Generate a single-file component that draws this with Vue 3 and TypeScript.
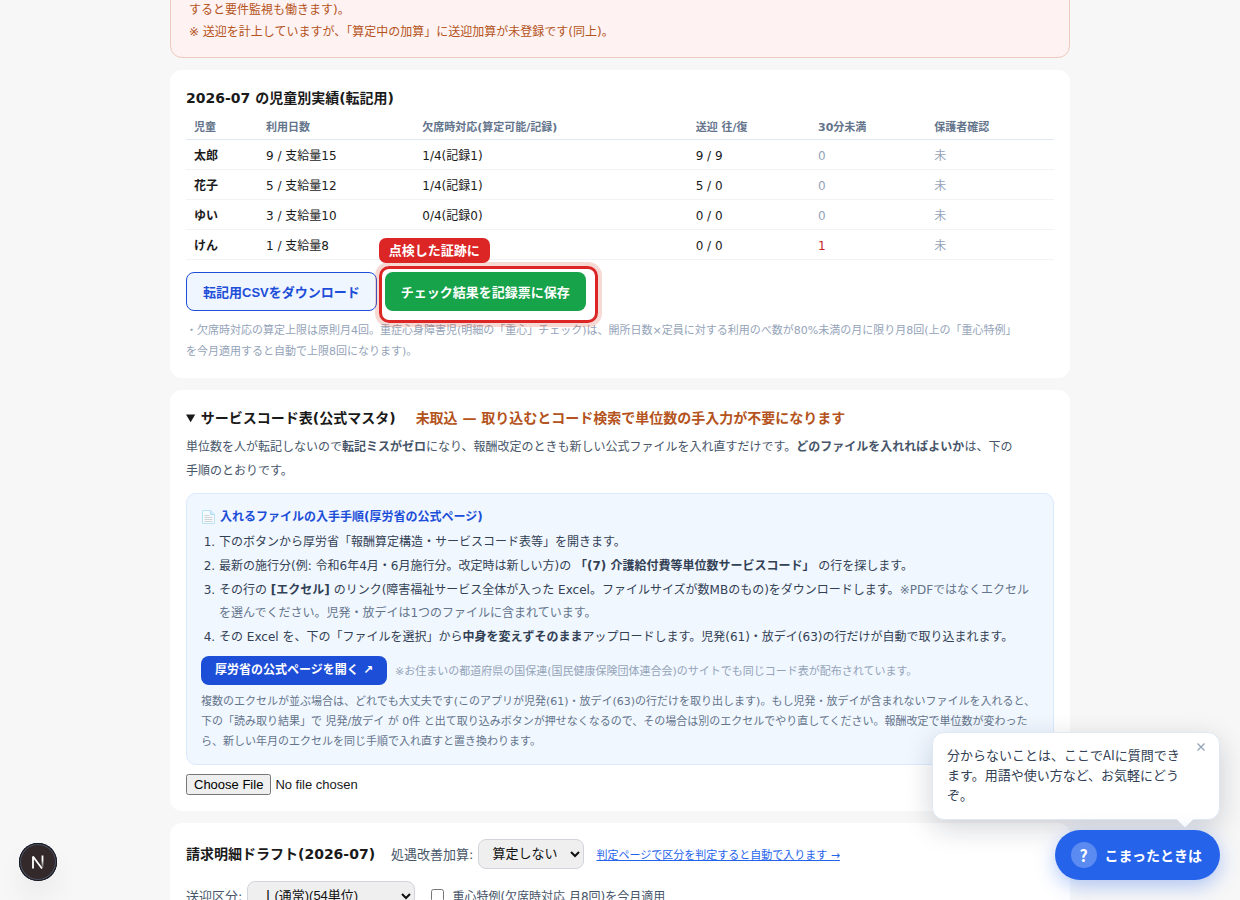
<script setup lang="ts">
import { ref } from 'vue'

interface ChildRow {
  name: string
  days: string
  absence: string
  transport: string
  short: number
}

const rows: ChildRow[] = [
  { name: '太郎', days: '9 / 支給量15', absence: '1/4(記録1)', transport: '9 / 9', short: 0 },
  { name: '花子', days: '5 / 支給量12', absence: '1/4(記録1)', transport: '5 / 0', short: 0 },
  { name: 'ゆい', days: '3 / 支給量10', absence: '0/4(記録0)', transport: '0 / 0', short: 0 },
  { name: 'けん', days: '1 / 支給量8', absence: '', transport: '0 / 0', short: 1 },
]

const improvement = ref('none')
const transportClass = ref('1')
const special = ref(false)
const tipOpen = ref(true)
</script>

<template>
  <div class="page" lang="ja">
    <main class="column">
      <section class="card warning">
        <p>すると要件監視も働きます)。</p>
        <p>※ 送迎を計上していますが、「算定中の加算」に送迎加算が未登録です(同上)。</p>
      </section>

      <section class="card">
        <h2 class="title">2026-07 の児童別実績(転記用)</h2>
        <table class="results">
          <thead>
            <tr>
              <th class="c-name">児童</th>
              <th class="c-days">利用日数</th>
              <th class="c-absence">欠席時対応(算定可能/記録)</th>
              <th class="c-transport">送迎 往/復</th>
              <th class="c-short">30分未満</th>
              <th>保護者確認</th>
            </tr>
          </thead>
          <tbody>
            <tr v-for="row in rows" :key="row.name">
              <td class="name">{{ row.name }}</td>
              <td>{{ row.days }}</td>
              <td>{{ row.absence }}</td>
              <td>{{ row.transport }}</td>
              <td :class="row.short ? 'alert' : 'muted'">{{ row.short }}</td>
              <td class="muted">未</td>
            </tr>
          </tbody>
        </table>
        <div class="actions">
          <button type="button" class="btn outline">転記用CSVをダウンロード</button>
          <div class="highlight">
            <button type="button" class="btn green">チェック結果を記録票に保存</button>
            <span class="frame"></span>
            <span class="badge">点検した証跡に</span>
          </div>
        </div>
        <p class="note">・欠席時対応の算定上限は原則月4回。重症心身障害児(明細の「重心」チェック)は、開所日数×定員に対する利用のべ数が80%未満の月に限り月8回(上の「重心特例」を今月適用すると自動で上限8回になります)。</p>
      </section>

      <section class="card">
        <details open>
          <summary class="summary">サービスコード表(公式マスタ)<span class="state">未取込 — 取り込むとコード検索で単位数の手入力が不要になります</span></summary>
          <p class="lead">単位数を人が転記しないので<b>転記ミスがゼロ</b>になり、報酬改定のときも新しい公式ファイルを入れ直すだけです。<b>どのファイルを入れればよいか</b>は、下の手順のとおりです。</p>
          <div class="guide">
            <h3>
              <svg width="15" height="16" viewBox="0 0 15 16" aria-hidden="true">
                <path d="M1.5 1.5h8.2l3.8 3.8v9.2h-12z" fill="#f7fafc" stroke="#b9e2f6" />
                <path d="M9.7 1.5v3.8h3.8" fill="#d8effa" stroke="#a5d8f0" />
                <path d="M3.5 6.5h5M3.5 8.5h8M3.5 10.5h8M3.5 12.5h8" stroke="#cfd3d8" />
              </svg>
              入れるファイルの入手手順(厚労省の公式ページ)
            </h3>
            <ol>
              <li>下のボタンから厚労省「報酬算定構造・サービスコード表等」を開きます。</li>
              <li>最新の施行分(例: 令和6年4月・6月施行分。改定時は新しい方)の <b>「(7) 介護給付費等単位数サービスコード」</b> の行を探します。</li>
              <li>その行の <b>[エクセル]</b> のリンク(障害福祉サービス全体が入った Excel。ファイルサイズが数MBのもの)をダウンロードします。<span class="sub">※PDFではなくエクセルを選んでください。児発・放デイは1つのファイルに含まれています。</span></li>
              <li>その Excel を、下の「ファイルを選択」から<b>中身を変えずそのまま</b>アップロードします。児発(61)・放デイ(63)の行だけが自動で取り込まれます。</li>
            </ol>
            <div class="open-row">
              <a href="#" class="open-link">厚労省の公式ページを開く ↗</a>
              <span class="open-note">※お住まいの都道府県の国保連(国民健康保険団体連合会)のサイトでも同じコード表が配布されています。</span>
            </div>
            <p class="extra">複数のエクセルが並ぶ場合は、どれでも大丈夫です(このアプリが児発(61)・放デイ(63)の行だけを取り出します)。もし児発・放デイが含まれないファイルを入れると、下の「読み取り結果」で 児発/放デイ が 0件 と出て取り込みボタンが押せなくなるので、その場合は別のエクセルでやり直してください。報酬改定で単位数が変わったら、新しい年月のエクセルを同じ手順で入れ直すと置き換わります。</p>
          </div>
          <input class="file" type="file" aria-label="ファイルを選択" />
        </details>
      </section>

      <section class="card">
        <div class="form-row">
          <h2 class="title draft-title">請求明細ドラフト(2026-07)</h2>
          <div class="field">
            <label for="improvement">処遇改善加算:</label>
            <select id="improvement" v-model="improvement">
              <option value="none">算定しない</option>
            </select>
          </div>
          <a href="#" class="judge">判定ページで区分を判定すると自動で入ります →</a>
        </div>
        <div class="form-row second">
          <div class="field">
            <label for="transport">送迎区分:</label>
            <select id="transport" v-model="transportClass" class="wide">
              <option value="1">Ⅰ(通常)(54単位)</option>
            </select>
          </div>
          <label class="check"><input v-model="special" type="checkbox" />重心特例(欠席時対応 月8回)を今月適用</label>
        </div>
      </section>
    </main>

    <button type="button" class="dev" aria-label="開発ツール">
      <svg width="38" height="38" viewBox="0 0 38 38" aria-hidden="true">
        <defs>
          <linearGradient id="stem" x1="0" y1="12" x2="0" y2="25" gradientUnits="userSpaceOnUse">
            <stop offset="0.4" stop-color="#fff" />
            <stop offset="1" stop-color="#fff" stop-opacity="0.1" />
          </linearGradient>
        </defs>
        <path d="M14 25.500V13.500L23 25.500" fill="none" stroke="#fff" stroke-width="1.8" stroke-linejoin="bevel" />
        <path d="M23.500 12.500V25" fill="none" stroke="url(#stem)" stroke-width="1.8" />
      </svg>
    </button>

    <aside v-if="tipOpen" class="bubble">
      分からないことは、ここでAIに質問できます。用語や使い方など、お気軽にどうぞ。
      <button type="button" class="close" aria-label="閉じる" @click="tipOpen = false">
        <svg width="8" height="8" viewBox="0 0 8 8" aria-hidden="true"><path d="M.5.5l7 7M7.500.5l-7 7" stroke="#94a3b8" stroke-width="1.300" /></svg>
      </button>
    </aside>
    <button type="button" class="help"><span class="mark">?</span>こまったときは</button>
  </div>
</template>

<style>
body {
  margin: 0;
  background: #f7f7f7;
}
</style>

<style scoped>
* {
  box-sizing: border-box;
}
.page {
  height: 100vh;
  overflow: hidden;
  color: #1a1a1a;
  background: #f7f7f7;
  font-family: "DejaVu Sans", "Noto Sans CJK JP", sans-serif;
  font-size: 12px;
}
.column {
  display: flex;
  flex-direction: column;
  gap: 12px;
  max-width: 900px;
  margin: -17px auto 0;
}
p, h2, h3, ol {
  margin: 0;
}
.card {
  padding: 16px;
  border-radius: 12px;
  background: #fff;
}
.warning {
  padding: 15px 18px 14px;
  border: 1px solid #efc9bd;
  background: #fef2f2;
  color: #b45320;
  line-height: 22px;
}
.title {
  font-size: 14px;
  line-height: 24px;
}
.results {
  width: 100%;
  margin-top: 4px;
  border-collapse: collapse;
  table-layout: fixed;
}
.results th {
  height: 25px;
  padding: 3px 8px 0;
  border-bottom: 1px solid #e2e8f0;
  color: #64748b;
  font-size: 11px;
  line-height: 18px;
  text-align: left;
}
.results td {
  height: 30px;
  padding: 3px 8px 0;
  border-bottom: 1px solid #f1f3f5;
  line-height: 18px;
}
.c-name { width: 8.3%; }
.c-days { width: 18%; }
.c-absence { width: 31.5%; }
.c-transport { width: 14.1%; }
.c-short { width: 13.4%; }
.results .name { font-weight: 700; }
.results .muted { color: #94a3b8; }
.results .alert { color: #c62828; }
.actions {
  display: flex;
  gap: 8px;
  margin-top: 12px;
}
.btn {
  height: 39px;
  padding: 0 16px;
  border: 0;
  border-radius: 8px;
  font: 700 13px "Liberation Sans", "Noto Sans CJK JP", sans-serif;
  white-space: nowrap;
}
.outline {
  border: 1px solid #1d4ed8;
  background: #eff6ff;
  color: #1d4ed8;
}
.green {
  background: #16a34a;
  color: #fff;
}
.highlight {
  position: relative;
  display: flex;
}
.frame {
  position: absolute;
  inset: -6px -12px -12px -6px;
  border: 3px solid #dc2626;
  border-radius: 10px;
  box-shadow: 0 0 0 4px rgba(220, 80, 60, 0.22);
  pointer-events: none;
}
.badge {
  position: absolute;
  left: -6px;
  top: -34px;
  padding: 0 10px;
  border-radius: 7px;
  background: #dc2626;
  color: #fff;
  font-size: 13px;
  font-weight: 700;
  line-height: 25px;
  white-space: nowrap;
}
.note {
  margin-top: 9px;
  padding-right: 32px;
  color: #94a3b8;
  font-size: 11px;
  line-height: 21px;
}
.summary {
  font-size: 14px;
  font-weight: 700;
  line-height: 24px;
}
.state {
  margin-left: 20px;
  color: #b45320;
}
.lead {
  margin-top: 5px;
  padding-right: 36px;
  color: #475569;
  line-height: 24px;
}
.guide {
  margin-top: 10px;
  padding: 13px 14px 12px;
  border: 1px solid #dbeafe;
  border-radius: 10px;
  background: #f0f7ff;
  color: #334155;
}
.guide h3 {
  display: flex;
  align-items: center;
  gap: 4px;
  color: #1d4ed8;
  font-size: 12px;
  line-height: 20px;
}
.guide ol {
  display: flex;
  flex-direction: column;
  gap: 1px;
  margin-top: 4px;
  padding-left: 18px;
  line-height: 23px;
}
.sub {
  color: #64748b;
}
.open-row {
  display: flex;
  align-items: center;
  gap: 8px;
  margin-top: 7px;
}
.open-link {
  padding: 0 14px;
  border-radius: 8px;
  background: #1d4ed8;
  color: #fff;
  font-weight: 700;
  line-height: 29px;
  text-decoration: none;
  white-space: nowrap;
}
.open-note {
  color: #94a3b8;
  font-size: 11px;
}
.extra {
  margin-top: 7px;
  color: #64748b;
  font-size: 11px;
  line-height: 20px;
}
.file {
  display: block;
  margin-top: 9px;
  font: 13px "Liberation Sans", sans-serif;
}
.form-row {
  display: flex;
  align-items: center;
  gap: 12px;
}
.draft-title {
  margin-right: 4px;
}
.second {
  gap: 16px;
  margin-top: 12px;
}
.field {
  display: flex;
  align-items: center;
  gap: 5px;
  color: #475569;
  font-size: 13px;
}
.field select {
  height: 30px;
  padding: 0 9px;
  border: 1px solid #d1d5db;
  border-radius: 8px;
  background: #efefef;
  color: #111;
  font: 13px "Liberation Sans", "Noto Sans CJK JP", sans-serif;
}
.field .wide {
  min-width: 168px;
}
.judge {
  color: #2563eb;
  font-size: 11px;
}
.check {
  display: flex;
  align-items: center;
  gap: 8px;
  color: #475569;
}
.check input {
  width: 13px;
  height: 13px;
  margin: 0;
}
.dev {
  position: absolute;
  left: 19px;
  bottom: 19px;
  width: 38px;
  height: 38px;
  padding: 0;
  border: 0;
  border-radius: 50%;
  background: #33292b;
  box-shadow: inset 0 0 0 1px #15161c, inset 0 0 0 2px #4b5060, 0 16px 32px -8px rgba(0, 0, 0, 0.16);
}
.dev svg {
  display: block;
}
.bubble {
  position: absolute;
  right: 20px;
  bottom: 80px;
  width: 288px;
  padding: 12px 38px 14px 14px;
  border: 1px solid #e0e8f4;
  border-radius: 12px;
  background: #fff;
  box-shadow: 0 8px 28px rgba(15, 23, 42, 0.18);
  color: #334155;
  font: 13px/20px "Noto Sans CJK JP", sans-serif;
}
.bubble::after {
  content: "";
  position: absolute;
  right: 28px;
  bottom: -6px;
  width: 12px;
  height: 12px;
  background: #fff;
  transform: rotate(45deg);
}
.close {
  position: absolute;
  top: 10px;
  right: 14px;
  padding: 0;
  border: 0;
  background: none;
  line-height: 8px;
}
.close svg {
  display: block;
}
.help {
  position: absolute;
  right: 20px;
  bottom: 20px;
  display: flex;
  align-items: center;
  gap: 8px;
  height: 50px;
  padding: 0 18px 0 16px;
  border: 0;
  border-radius: 25px;
  background: #2563eb;
  box-shadow: 0 6px 20px rgba(37, 99, 235, 0.35);
  color: #fff;
  font: 700 14px "Noto Sans CJK JP", sans-serif;
}
.mark {
  width: 26px;
  height: 26px;
  border-radius: 50%;
  background: rgba(255, 255, 255, 0.25);
  font-size: 16px;
  line-height: 26px;
  text-align: center;
}
</style>
